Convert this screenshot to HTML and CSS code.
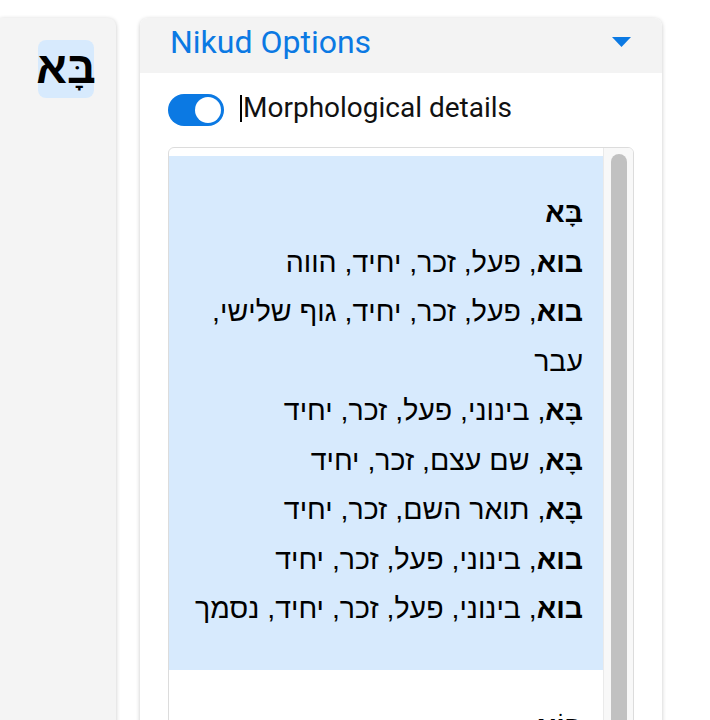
FILE: index.html
```html
<!DOCTYPE html>
<html lang="en">
<head>
<meta charset="utf-8">
<title>Nikud Options</title>
<link rel="stylesheet" href="styles.css">
</head>
<body>
<div class="page">
  <aside class="side">
    <div class="word-chip" dir="rtl">בָּא</div>
  </aside>
  <section class="panel">
    <header class="panel-head">
      <span class="title">Nikud Options</span>
      <svg class="caret" width="19" height="10" viewBox="0 0 19 10"><path d="M0 0 H19 L9.5 10 Z" fill="#0b79e3"/></svg>
    </header>
    <div class="panel-body">
      <div class="switch-row">
        <span class="switch"><span class="knob"></span></span>
        <span class="text-caret"></span>
        <span class="switch-label">Morphological details</span>
      </div>
      <div class="listbox">
        <div class="list">
          <div class="item selected" dir="rtl">
            <div class="line head"><b>בָּא</b></div>
            <div class="line"><b>בוא</b>, פעל, זכר, יחיד, הווה</div>
            <div class="line"><b>בוא</b>, פעל, זכר, יחיד, גוף שלישי,<br>עבר</div>
            <div class="line"><b>בָּא</b>, בינוני, פעל, זכר, יחיד</div>
            <div class="line"><b>בָּא</b>, שם עצם, זכר, יחיד</div>
            <div class="line"><b>בָּא</b>, תואר השם, זכר, יחיד</div>
            <div class="line"><b>בוא</b>, בינוני, פעל, זכר, יחיד</div>
            <div class="line"><b>בוא</b>, בינוני, פעל, זכר, יחיד, נסמך</div>
          </div>
          <div class="item" dir="rtl">
            <div class="line head"><b>בּוֹא</b></div>
          </div>
        </div>
        <div class="scrollbar"><div class="thumb"></div></div>
      </div>
    </div>
  </section>
</div>
</body>
</html>
```
FILE: styles.css
```css
html, body {
  margin: 0;
  padding: 0;
  background: #ffffff;
  height: 720px;
  overflow: hidden;
}

.page {
  display: flex;
  align-items: flex-start;
  gap: 24px;
  padding-top: 18px;
  font-family: Roboto, "Liberation Sans", sans-serif;
}

.side {
  width: 116px;
  height: 720px;
  box-sizing: border-box;
  background: #f4f4f4;
  border-top-right-radius: 8px;
  box-shadow: 0 1px 4px rgba(0, 0, 0, 0.22);
  display: flex;
  justify-content: flex-end;
  padding: 22px 22px 0 0;
}

.word-chip {
  align-self: flex-start;
  background: #d7eafd;
  border-radius: 8px;
  width: 56px;
  height: 58px;
  box-sizing: border-box;
  display: flex;
  align-items: flex-start;
  justify-content: center;
  font-family: "Liberation Sans", sans-serif;
  font-weight: bold;
  font-size: 45px;
  line-height: 56px;
  color: #000;
}

.panel {
  width: 522px;
  height: 720px;
  background: #fff;
  border-radius: 8px 8px 0 0;
  box-shadow: 0 1px 4px rgba(0, 0, 0, 0.22);
  overflow: hidden;
}

.panel-head {
  height: 55px;
  background: #f3f3f3;
  display: flex;
  align-items: center;
  justify-content: space-between;
  padding: 0 30px 0 30px;
  box-sizing: border-box;
}

.title {
  color: #0b79e3;
  font-size: 32px;
  margin-top: -8px;
}

.caret {
  margin-top: -8px;
  margin-right: 1px;
}

.panel-body {
  padding: 21px 28px 0 28px;
}

.switch-row {
  display: flex;
  align-items: center;
  height: 32px;
}

.switch {
  width: 56px;
  height: 32px;
  border-radius: 16px;
  background: #0b79e3;
  display: flex;
  align-items: center;
  justify-content: flex-end;
  padding-right: 3px;
  box-sizing: border-box;
}

.knob {
  width: 26px;
  height: 26px;
  border-radius: 50%;
  background: #fff;
}

.text-caret {
  width: 2px;
  height: 27px;
  background: #000;
  margin-left: 16px;
  margin-right: 1px;
  margin-top: -3px;
}

.switch-label {
  font-size: 28px;
  color: #111;
  margin-top: -6px;
}

.listbox {
  margin-top: 21px;
  border: 1px solid #dcdcdc;
  border-radius: 6px 6px 0 0;
  display: flex;
  height: 600px;
  overflow: hidden;
}

.list {
  flex: 1;
  padding-top: 8px;
}

.item {
  padding: 32px 20px 36px 20px;
  font-family: "Liberation Sans", sans-serif;
  font-size: 28.5px;
  line-height: 49.5px;
  color: #000;
  text-align: right;
}

.item.selected {
  background: #d7eafd;
}

.scrollbar {
  width: 30px;
  background: #f8f8f8;
  border-left: 1px solid #eaeaea;
  box-sizing: border-box;
  display: flex;
  justify-content: center;
  padding-top: 6px;
}

.thumb {
  width: 16px;
  height: 700px;
  border-radius: 8px;
  background: #c1c1c1;
}
```
